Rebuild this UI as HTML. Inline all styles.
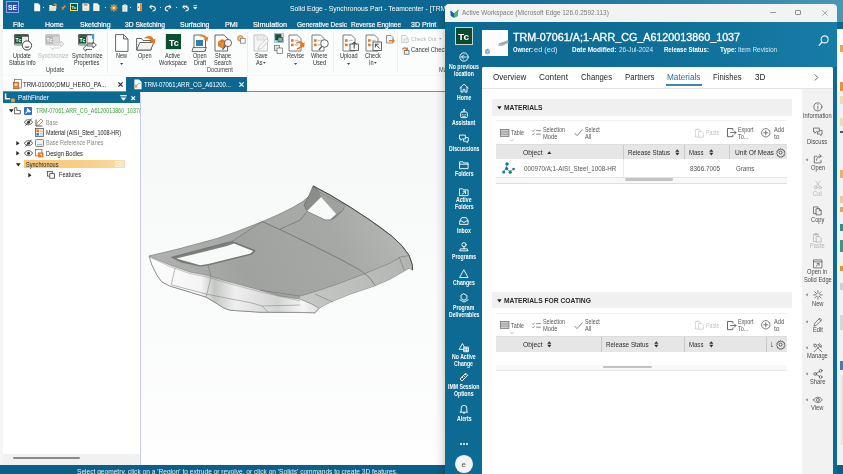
<!DOCTYPE html>
<html><head><meta charset="utf-8"><title>Solid Edge - Active Workspace</title>
<style>
html,body{margin:0;padding:0;}
body{width:843px;height:474px;overflow:hidden;position:relative;background:#f6f9f9;font-family:"Liberation Sans",sans-serif;}
.b{position:absolute;}
.t{position:absolute;white-space:nowrap;transform-origin:0 50%;}
.i{position:absolute;overflow:visible;}
#wrap{position:absolute;left:-4px;top:-4px;width:851px;height:482px;filter:blur(0.5px);}
#in{position:absolute;left:4px;top:4px;width:843px;height:474px;}
</style></head><body><div id="wrap"><div id="in">
<div class="b" style="left:-4.0px;top:-4.0px;width:851.0px;height:482.0px;background:linear-gradient(180deg,#f5f8f7 0px,#f5f8f7 96px,#fafbfb 300px,#fefefe 468px);"></div>
<div class="b" style="left:2.8px;top:-4.0px;width:844.2px;height:33.2px;background:#0c6890;"></div>
<div class="b" style="left:2.8px;top:29.2px;width:844.2px;height:46.3px;background:#fbfcfc;"></div>
<div class="b" style="left:2.8px;top:75.5px;width:844.2px;height:16.5px;background:#fdfdfd;"></div>
<div class="b" style="left:2.8px;top:91.3px;width:443.2px;height:0.8px;background:#5b9bb8;"></div>
<div class="b" style="left:-4.0px;top:-4.0px;width:6.8px;height:482.0px;background:#f4f6f6;"></div>
<div class="b" style="left:6.2px;top:0.8px;width:13.2px;height:12.4px;background:#2b50b4;border:0.8px solid #8fa6e6;box-sizing:border-box;"></div>
<span class="t" style="left:8.2px;top:3.1px;font-size:7.5px;line-height:9.00px;color:#ffffff;font-weight:700;transform:scaleX(0.900);">SE</span>
<span class="t" style="left:290.4px;top:3.6px;font-size:7.86px;line-height:9.43px;color:#ffffff;transform:scaleX(0.860);">Solid Edge - Synchronous Part - Teamcenter - [TRM</span>
<span class="t" style="left:12.5px;top:19.7px;font-size:8.0px;line-height:9.60px;color:#ffffff;transform:scaleX(0.853);-webkit-text-stroke:0.200px #fff;">File</span>
<span class="t" style="left:45.4px;top:19.7px;font-size:8.0px;line-height:9.60px;color:#ffffff;transform:scaleX(0.872);-webkit-text-stroke:0.200px #fff;">Home</span>
<span class="t" style="left:79.5px;top:19.7px;font-size:8.0px;line-height:9.60px;color:#ffffff;transform:scaleX(0.868);-webkit-text-stroke:0.200px #fff;">Sketching</span>
<span class="t" style="left:125.0px;top:19.7px;font-size:8.0px;line-height:9.60px;color:#ffffff;transform:scaleX(0.841);-webkit-text-stroke:0.200px #fff;">3D Sketching</span>
<span class="t" style="left:180.0px;top:19.7px;font-size:8.0px;line-height:9.60px;color:#ffffff;transform:scaleX(0.873);-webkit-text-stroke:0.200px #fff;">Surfacing</span>
<span class="t" style="left:225.0px;top:19.7px;font-size:8.0px;line-height:9.60px;color:#ffffff;transform:scaleX(0.900);-webkit-text-stroke:0.200px #fff;">PMI</span>
<span class="t" style="left:253.0px;top:19.7px;font-size:8.0px;line-height:9.60px;color:#ffffff;transform:scaleX(0.910);-webkit-text-stroke:0.200px #fff;">Simulation</span>
<span class="t" style="left:296.5px;top:19.7px;font-size:8.0px;line-height:9.60px;color:#ffffff;transform:scaleX(0.813);-webkit-text-stroke:0.200px #fff;">Generative Desic</span>
<span class="t" style="left:351.0px;top:19.7px;font-size:8.0px;line-height:9.60px;color:#ffffff;transform:scaleX(0.815);-webkit-text-stroke:0.200px #fff;">Reverse Enginee</span>
<span class="t" style="left:411.3px;top:19.7px;font-size:8.0px;line-height:9.60px;color:#ffffff;transform:scaleX(0.875);-webkit-text-stroke:0.200px #fff;">3D Print</span>
<div class="b" style="left:-4.0px;top:465.2px;width:851.0px;height:12.8px;background:#0b6087;"></div>
<span class="t" style="left:77.0px;top:466.5px;font-size:7.6px;line-height:9.12px;color:#e8f2f6;transform:scaleX(0.869);">Select geometry, click on a &#x27;Region&#x27; to extrude or revolve, or click on &#x27;Solids&#x27; commands to create 3D features.</span>
<span class="t" style="left:22.7px;top:80.4px;font-size:7.56px;line-height:9.07px;color:#222;transform:scaleX(0.791);">TRM-01000;DMU_HERO_PA...</span>
<svg class="i" style="left:118.1px;top:82.1px;" width="5" height="5" viewBox="0 0 5 5"><path d="M0.400 0.400L4.60 4.60M4.60 0.400L0.400 4.60" stroke="#222" stroke-width="1.1" fill="none"/></svg>
<div class="b" style="left:126.0px;top:77.4px;width:120.6px;height:14.6px;background:#0c6890;"></div>
<span class="t" style="left:144.0px;top:80.4px;font-size:7.56px;line-height:9.07px;color:#ffffff;transform:scaleX(0.790);">TRM-07061;ARR_CG_A61200...</span>
<svg class="i" style="left:239.3px;top:82.1px;" width="5" height="5" viewBox="0 0 5 5"><path d="M0.400 0.400L4.60 4.60M4.60 0.400L0.400 4.60" stroke="#ffffff" stroke-width="1.2" fill="none"/></svg>
<div class="b" style="left:3.0px;top:91.8px;width:137.4px;height:11.0px;background:#0d6a92;"></div>
<span class="t" style="left:17.5px;top:94.1px;font-size:7.37px;line-height:8.84px;color:#ffffff;transform:scaleX(0.860);">PathFinder</span>
<div class="b" style="left:140.2px;top:92.6px;width:1.0px;height:372.6px;background:#c9cdf0;"></div>
<div class="b" style="left:3.0px;top:102.8px;width:137.2px;height:351.4px;background:#ffffff;"></div>
<div class="b" style="left:3.0px;top:454.2px;width:137.2px;height:11.0px;background:#f1f1f1;"></div>
<div class="b" style="left:13.0px;top:457.3px;width:67.0px;height:2.0px;background:#8a8a8a;border-radius:1px;"></div>
<span class="t" style="left:36.0px;top:107.3px;font-size:6.3px;line-height:7.56px;color:#3aa23a;transform:scaleX(0.847);">TRM-07061;ARR_CG_A6120013860_1037/</span>
<span class="t" style="left:46.0px;top:118.5px;font-size:6.3px;line-height:7.56px;color:#888;transform:scaleX(0.836);">Base</span>
<span class="t" style="left:46.0px;top:128.7px;font-size:6.3px;line-height:7.56px;color:#222;transform:scaleX(0.864);">Material (AISI_Steel_1008-HR)</span>
<span class="t" style="left:46.0px;top:139.3px;font-size:6.3px;line-height:7.56px;color:#888;transform:scaleX(0.869);">Base Reference Planes</span>
<span class="t" style="left:46.0px;top:150.0px;font-size:6.3px;line-height:7.56px;color:#222;transform:scaleX(0.911);">Design Bodies</span>
<span class="t" style="left:58.5px;top:171.4px;font-size:6.3px;line-height:7.56px;color:#222;transform:scaleX(0.885);">Features</span>
<div class="b" style="left:24.0px;top:160.0px;width:101.0px;height:8.2px;background:linear-gradient(90deg,#f8c775,#f9d08c 70%,#fbdca8);"></div>
<span class="t" style="left:25.5px;top:160.7px;font-size:6.3px;line-height:7.56px;color:#222;transform:scaleX(0.884);">Synchronous</span>
<svg class="i" style="left:13.5px;top:34.0px;" width="19" height="17" viewBox="0 0 19 17"><rect x="0.5" y="0.5" width="14" height="10.5" rx="1" fill="#e9ecea" stroke="#4a4a4a" stroke-width="0.8"/><rect x="0.5" y="0.5" width="14" height="2.2" fill="#4a4a4a"/><rect x="1" y="2.4" width="7" height="7.2" fill="#0c5a36"/><text x="1.6" y="8.2" font-size="5.2" font-weight="700" fill="#fff" font-family="Liberation Sans">Tc</text><circle cx="13" cy="11.5" r="4.6" fill="#fff" stroke="#444" stroke-width="1"/><path d="M10.2 12.5a3 2.4 0 0 0 5.6 0z" fill="#666"/></svg>
<span class="t" style="left:13.0px;top:52.2px;font-size:6.8px;line-height:8.16px;color:#333;transform:scaleX(0.820);">Update</span>
<span class="t" style="left:8.7px;top:58.5px;font-size:6.8px;line-height:8.16px;color:#333;transform:scaleX(0.820);">Status Info</span>
<svg class="i" style="left:45.0px;top:34.0px;" width="19" height="17" viewBox="0 0 19 17"><rect x="0.5" y="0.5" width="14" height="10.5" rx="1" fill="#d9d9d9" stroke="#c4c4c4" stroke-width="0.8"/><rect x="0.5" y="0.5" width="14" height="2.2" fill="#c4c4c4"/><rect x="1" y="2.4" width="7" height="7.2" fill="#b5b5b5"/><text x="1.6" y="8.2" font-size="5.2" font-weight="700" fill="#fff" font-family="Liberation Sans">Tc</text><path d="M9 9h7v-2l3 3-3 3v-2h-7z" fill="#ececec" stroke="#c2c2c2" stroke-width="0.7"/><path d="M15 14h-7v2l-3-3" fill="none" stroke="#c8c8c8" stroke-width="0.7"/></svg>
<span class="t" style="left:38.3px;top:52.2px;font-size:6.8px;line-height:8.16px;color:#b9b9b9;transform:scaleX(0.820);">Synchronize</span>
<svg class="i" style="left:78.0px;top:34.0px;" width="19" height="17" viewBox="0 0 19 17"><rect x="0.5" y="0.5" width="14" height="10.5" rx="1" fill="#e9ecea" stroke="#4a4a4a" stroke-width="0.8"/><rect x="0.5" y="0.5" width="14" height="2.2" fill="#4a4a4a"/><rect x="1" y="2.4" width="7" height="7.2" fill="#0c5a36"/><text x="1.6" y="8.2" font-size="5.2" font-weight="700" fill="#fff" font-family="Liberation Sans">Tc</text><rect x="9" y="1" width="6.5" height="8" fill="#f4f4f4" stroke="#555" stroke-width="0.7"/><rect x="14" y="0" width="2.2" height="5" fill="#3aa0d0"/><path d="M9 10h6v-2l3.4 3-3.4 3v-2h-6z" fill="#f2f2f2" stroke="#444" stroke-width="0.8"/><path d="M14 15.5h-6v1.6l-3-2.6 3-2.6" fill="#f2f2f2" stroke="#444" stroke-width="0.8"/></svg>
<span class="t" style="left:71.5px;top:52.2px;font-size:6.8px;line-height:8.16px;color:#333;transform:scaleX(0.820);">Synchronize</span>
<span class="t" style="left:74.1px;top:58.5px;font-size:6.8px;line-height:8.16px;color:#333;transform:scaleX(0.820);">Properties</span>
<span class="t" style="left:45.8px;top:65.7px;font-size:6.6px;line-height:7.92px;color:#444;transform:scaleX(0.860);">Update</span>
<div class="b" style="left:106.6px;top:32.0px;width:0.7px;height:41.0px;background:#eceeef;"></div>
<svg class="i" style="left:115.0px;top:33.5px;" width="14" height="18" viewBox="0 0 14 18"><path d="M0.6 0.6h8l4.4 4.4v12.4h-12.4z" fill="#fff" stroke="#555" stroke-width="0.9"/><path d="M8.6 0.6v4.4h4.4" fill="none" stroke="#555" stroke-width="0.9"/></svg>
<span class="t" style="left:116.0px;top:52.2px;font-size:6.8px;line-height:8.16px;color:#333;transform:scaleX(0.820);">New</span>
<svg class="i" style="left:119.8px;top:63.4px;" width="3.2" height="1.98" viewBox="0 0 3.2 1.98"><path d="M0 0h3.2l-1.6 1.98z" fill="#444"/></svg>
<svg class="i" style="left:136.0px;top:35.0px;" width="20" height="16" viewBox="0 0 20 16"><path d="M0.6 15V3.5h5l1.5 2h8V15z" fill="#fdfdfd" stroke="#555" stroke-width="0.9"/><path d="M0.6 15l3.2-7.5h14L14.6 15z" fill="#f3f3f3" stroke="#555" stroke-width="0.9"/><path d="M8 3.400c3.400-3.600 8.400-3 9.600 1l1.900-0.900-1 5.600-5.200-2.400 1.900-0.900c-1.300-2.600-4-2.900-7.200-2.400z" fill="#e9781c"/></svg>
<span class="t" style="left:138.2px;top:52.2px;font-size:6.8px;line-height:8.16px;color:#333;transform:scaleX(0.820);">Open</span>
<div class="b" style="left:165.2px;top:34.4px;width:16.2px;height:16.0px;background:#0b4f2f;border-left:1px solid #e6e98c;border-bottom:1px solid #e6e98c;box-sizing:border-box;"></div>
<span class="t" style="left:168.6px;top:38.4px;font-size:8.6px;line-height:10.32px;color:#ffffff;font-weight:700;transform:scaleX(1.043);">Tc</span>
<span class="t" style="left:164.8px;top:52.2px;font-size:6.8px;line-height:8.16px;color:#333;transform:scaleX(0.820);">Active</span>
<span class="t" style="left:158.5px;top:58.5px;font-size:6.8px;line-height:8.16px;color:#333;transform:scaleX(0.820);">Workspace</span>
<svg class="i" style="left:192.0px;top:33.5px;" width="17" height="18" viewBox="0 0 17 18"><path d="M2 1h8.5l3 3v13H2z" fill="#fff" stroke="#555" stroke-width="0.9"/><rect x="4" y="6" width="7" height="6" fill="#2f7fb2"/><path d="M1 13.5h13.5l-2 4H0z" fill="#f0f0f0" stroke="#555" stroke-width="0.8"/><path d="M7 2.6c3-2.6 6.6-2 7.8 0.8l1.5-0.8-0.9 4.6-4-2 1.4-0.8c-1.1-1.9-3.3-2.1-5.8-1.8z" fill="#e9781c"/></svg>
<span class="t" style="left:193.2px;top:52.2px;font-size:6.8px;line-height:8.16px;color:#333;transform:scaleX(0.820);">Open</span>
<span class="t" style="left:194.0px;top:58.5px;font-size:6.8px;line-height:8.16px;color:#333;transform:scaleX(0.820);">Draft</span>
<svg class="i" style="left:214.0px;top:33.5px;" width="19" height="18" viewBox="0 0 19 18"><path d="M1 1h9l3.6 3.6V17H1z" fill="#fff" stroke="#555" stroke-width="0.9"/><path d="M4 7.5l4.2-2.4 4.2 2.4v4.6l-4.2 2.4L4 12.100z" fill="#e9781c"/><path d="M4 7.5l4.2 2.2 4.2-2.200M8.2 9.700v4.8" stroke="#f7b77d" stroke-width="0.6" fill="none"/><circle cx="14" cy="9" r="3.6" fill="#fff" fill-opacity="0.85" stroke="#555" stroke-width="0.9"/><path d="M11.5 12l-3 3.6" stroke="#555" stroke-width="1.3"/></svg>
<span class="t" style="left:214.9px;top:52.2px;font-size:6.8px;line-height:8.16px;color:#333;transform:scaleX(0.820);">Shape</span>
<span class="t" style="left:214.2px;top:58.5px;font-size:6.8px;line-height:8.16px;color:#333;transform:scaleX(0.820);">Search</span>
<span class="t" style="left:207.1px;top:65.7px;font-size:6.6px;line-height:7.92px;color:#444;transform:scaleX(0.860);">Document</span>
<svg class="i" style="left:236.6px;top:35.0px;" width="9" height="9" viewBox="0 0 9 9"><circle cx="3.4" cy="3.4" r="2.8" fill="#f2c28e" stroke="#c6771f" stroke-width="0.8"/><rect x="3.6" y="3.6" width="4.6" height="4.6" fill="#f7f7f7" stroke="#777" stroke-width="0.7"/></svg>
<div class="b" style="left:247.0px;top:32.0px;width:0.7px;height:41.0px;background:#eceeef;"></div>
<svg class="i" style="left:252.8px;top:33.5px;" width="17" height="18" viewBox="0 0 17 18"><path d="M1 1h10.500l3 3V17H1z" fill="#f6f6f6" stroke="#bdbdbd" stroke-width="0.9"/><rect x="4" y="1" width="7" height="5" fill="#ececec" stroke="#c9c9c9" stroke-width="0.6"/><path d="M5 15.500l1-3.200 7.500-7.500 2.200 2.200-7.500 7.500z" fill="#fafafa" stroke="#bdbdbd" stroke-width="0.8"/></svg>
<span class="t" style="left:254.6px;top:52.2px;font-size:6.8px;line-height:8.16px;color:#333;transform:scaleX(0.820);">Save</span>
<span class="t" style="left:256.1px;top:58.5px;font-size:6.8px;line-height:8.16px;color:#333;transform:scaleX(0.820);">As</span>
<svg class="i" style="left:263.4px;top:61.9px;" width="2.8" height="1.74" viewBox="0 0 2.8 1.74"><path d="M0 0h2.8l-1.4 1.74z" fill="#444"/></svg>
<div class="b" style="left:273.6px;top:33.4px;width:10.0px;height:9.8px;background:#cfe3f1;border:0.6px solid #9dc3dd;box-sizing:border-box;"></div>
<svg class="i" style="left:274.6px;top:34.4px;" width="8" height="8" viewBox="0 0 8 8"><rect x="0.5" y="0.5" width="5.5" height="5.5" fill="#0c5a36" stroke="#333" stroke-width="0.6"/><rect x="3" y="3.4" width="4.6" height="4.2" fill="#8cb0a0" stroke="#333" stroke-width="0.6"/></svg>
<svg class="i" style="left:274.4px;top:44.8px;" width="9" height="9" viewBox="0 0 9 9"><rect x="0.5" y="0.5" width="5" height="5" fill="#e8e8e8" stroke="#666" stroke-width="0.7"/><rect x="3" y="3" width="5.4" height="5.4" fill="#f7f7f7" stroke="#666" stroke-width="0.7"/></svg>
<svg class="i" style="left:288.0px;top:33.5px;" width="18" height="18" viewBox="0 0 18 18"><path d="M1 1h8.500l3.500 3.500V17H1z" fill="#fdfdfd" stroke="#6e6e6e" stroke-width="0.9"/><rect x="3" y="5.200" width="2.600" height="2.600" fill="#e9781c"/><rect x="6.600" y="5.800" width="4" height="1.400" fill="#c4c4c4"/><rect x="3" y="9.600" width="2.600" height="2.600" fill="#e9781c"/><rect x="6.600" y="10.200" width="4" height="1.400" fill="#c4c4c4"/><path d="M8 8.5c3-2 6-1.400 7.200 0.800l1.500-1-0.600 5.200-4.800-1.800 1.700-1c-1-1.500-3-1.700-5-0.900z" fill="#e9781c"/><path d="M9 15l6-3" stroke="#e9781c" stroke-width="1.800"/></svg>
<span class="t" style="left:287.2px;top:52.2px;font-size:6.8px;line-height:8.16px;color:#333;transform:scaleX(0.820);">Revise</span>
<svg class="i" style="left:294.1px;top:63.4px;" width="3.2" height="1.98" viewBox="0 0 3.2 1.98"><path d="M0 0h3.2l-1.6 1.98z" fill="#444"/></svg>
<svg class="i" style="left:311.0px;top:33.5px;" width="19" height="18" viewBox="0 0 19 18"><path d="M1 1h8.500l3.500 3.500V17H1z" fill="#fdfdfd" stroke="#6e6e6e" stroke-width="0.9"/><rect x="3" y="5.200" width="2.600" height="2.600" fill="#e9781c"/><rect x="6.600" y="5.800" width="4" height="1.400" fill="#c4c4c4"/><rect x="3" y="9.600" width="2.600" height="2.600" fill="#e9781c"/><rect x="6.600" y="10.200" width="4" height="1.400" fill="#c4c4c4"/><circle cx="13.500" cy="9.500" r="3.800" fill="#fff" fill-opacity="0.9" stroke="#555" stroke-width="0.9"/><path d="M10.800 12.400l-3 3.600" stroke="#555" stroke-width="1.300"/></svg>
<span class="t" style="left:310.8px;top:52.2px;font-size:6.8px;line-height:8.16px;color:#333;transform:scaleX(0.820);">Where</span>
<span class="t" style="left:312.5px;top:58.5px;font-size:6.8px;line-height:8.16px;color:#333;transform:scaleX(0.820);">Used</span>
<div class="b" style="left:333.0px;top:32.0px;width:0.7px;height:41.0px;background:#eceeef;"></div>
<svg class="i" style="left:341.5px;top:33.5px;" width="18" height="18" viewBox="0 0 18 18"><path d="M1 1h8.500l3.500 3.500V17H1z" fill="#fdfdfd" stroke="#6e6e6e" stroke-width="0.9"/><rect x="3" y="5.200" width="2.600" height="2.600" fill="#e9781c"/><rect x="6.600" y="5.800" width="4" height="1.400" fill="#c4c4c4"/><rect x="3" y="9.600" width="2.600" height="2.600" fill="#e9781c"/><rect x="6.600" y="10.200" width="4" height="1.400" fill="#c4c4c4"/><rect x="8" y="10" width="8.500" height="6.500" fill="#f4f4f4" stroke="#444" stroke-width="0.8"/><path d="M12.200 14.500V8.200M10 10.200l2.200-2.200 2.200 2.200" fill="none" stroke="#333" stroke-width="0.9"/></svg>
<span class="t" style="left:340.2px;top:52.2px;font-size:6.8px;line-height:8.16px;color:#333;transform:scaleX(0.820);">Upload</span>
<svg class="i" style="left:347.4px;top:63.4px;" width="3.2" height="1.98" viewBox="0 0 3.2 1.98"><path d="M0 0h3.2l-1.6 1.98z" fill="#444"/></svg>
<svg class="i" style="left:365.0px;top:33.5px;" width="18" height="18" viewBox="0 0 18 18"><path d="M1 1h8.500l3.500 3.500V17H1z" fill="#fdfdfd" stroke="#6e6e6e" stroke-width="0.9"/><rect x="3" y="5.200" width="2.600" height="2.600" fill="#e9781c"/><rect x="6.600" y="5.800" width="4" height="1.400" fill="#c4c4c4"/><rect x="3" y="9.600" width="2.600" height="2.600" fill="#e9781c"/><rect x="6.600" y="10.200" width="4" height="1.400" fill="#c4c4c4"/><rect x="8" y="8" width="8.500" height="8.500" fill="#fafafa" stroke="#444" stroke-width="0.8"/><path d="M14.800 14.600l-4.200-4.200M10.400 13.400v-3.200h3.200" fill="none" stroke="#333" stroke-width="0.9"/></svg>
<span class="t" style="left:364.7px;top:52.2px;font-size:6.8px;line-height:8.16px;color:#333;transform:scaleX(0.820);">Check</span>
<span class="t" style="left:368.9px;top:58.5px;font-size:6.8px;line-height:8.16px;color:#333;transform:scaleX(0.820);">In</span>
<svg class="i" style="left:374.4px;top:61.9px;" width="2.8" height="1.74" viewBox="0 0 2.8 1.74"><path d="M0 0h2.8l-1.4 1.74z" fill="#444"/></svg>
<svg class="i" style="left:386.4px;top:35.0px;" width="9" height="9" viewBox="0 0 9 9"><path d="M0.500 0.500h4.500l2 2v5.500h-6.500z" fill="#f5f5f5" stroke="#666" stroke-width="0.7"/><path d="M3 5h3.500v-1.500l2.500 2.300-2.500 2.300v-1.500h-3.500z" fill="#e9781c"/></svg>
<div class="b" style="left:396.6px;top:32.0px;width:0.7px;height:41.0px;background:#eceeef;"></div>
<svg class="i" style="left:401.4px;top:35.0px;" width="8" height="8" viewBox="0 0 8 8"><path d="M0.500 0.500h4l2 2v5h-6z" fill="#f6f6f6" stroke="#c4c4c4" stroke-width="0.7"/><rect x="3" y="4" width="4.500" height="3.600" fill="#efefef" stroke="#c4c4c4" stroke-width="0.6"/></svg>
<span class="t" style="left:411.0px;top:35.3px;font-size:6.25px;line-height:7.50px;color:#b7b7b7;transform:scaleX(0.860);">Check Out</span>
<svg class="i" style="left:438.7px;top:38.2px;" width="2.6" height="1.61" viewBox="0 0 2.6 1.61"><path d="M0 0h2.6l-1.3 1.61z" fill="#999"/></svg>
<svg class="i" style="left:401.4px;top:45.6px;" width="8.6" height="8.6" viewBox="0 0 8.6 8.6"><path d="M1 3.500a3 3 0 0 1 5-1.500l1-1v3.200h-3.200l1.100-1.100a1.800 1.800 0 0 0-2.700 0.900z" fill="#e9781c"/><rect x="3.200" y="4.400" width="4.800" height="3.800" fill="#f4f4f4" stroke="#555" stroke-width="0.7"/></svg>
<span class="t" style="left:411.0px;top:45.9px;font-size:6.6px;line-height:7.92px;color:#333;transform:scaleX(0.888);">Cancel Check</span>
<span class="t" style="left:438.6px;top:65.7px;font-size:6.6px;line-height:7.92px;color:#444;transform:scaleX(0.86);">Ma</span>
<svg class="i" style="left:33.6px;top:3.0px;" width="6.4" height="8.48" viewBox="0 0 8 10.6"><path d="M0.300 0.300h4.800l2.600 2.600v7.400h-7.400z" fill="#fbfbf4"/><path d="M5.100 0.300v2.600h2.600" fill="#d9d9cf"/></svg>
<div class="b" style="left:42.9px;top:6.6px;width:1.4px;height:1.4px;background:#e4eef3;"></div>
<svg class="i" style="left:48.6px;top:3.3px;" width="8.0" height="8.0" viewBox="0 0 10 10"><path d="M0.400 9.600V2.400h3l1 1.200h4.400v6z" fill="#f3efe4"/><path d="M0.400 9.600l1.800-4.400h7.600l-1.800 4.400z" fill="#e6e0cf"/><path d="M4.600 2c1.600-1.800 3.800-1.600 4.600 0.200l1-0.500-0.600 3-2.600-1.200 1-0.500c-0.700-1.200-2-1.300-3.400-1z" fill="#f08a24"/></svg>
<svg class="i" style="left:60.2px;top:3.6px;" width="6.4" height="7.2" viewBox="0 0 8 9"><path d="M4.600 0.400l3 3-1.400 0.600-1.600 2-0.400 1.800-1.300-1.300-2.500 2.500 2.500-3.500-1.300-1.300 1.800-0.400 2-1.600z" fill="#f08a24"/></svg>
<div class="b" style="left:70.0px;top:3.2px;width:7.8px;height:8.2px;background:#0c5a36;border:0.800px solid #e9e07a;box-sizing:border-box;"></div>
<span class="t" style="left:71.6px;top:4.8px;font-size:4.4px;line-height:5.28px;color:#ffffff;font-weight:700;">Tc</span>
<svg class="i" style="left:82.2px;top:3.3px;" width="7.68" height="8.0" viewBox="0 0 9.6 10"><path d="M0.400 0.400h7.400l1.400 1.400v7.800h-8.800z" fill="#f3ead9"/><rect x="2.200" y="0.400" width="4.600" height="3" fill="#d98f86"/><rect x="1.800" y="5.400" width="6" height="4.200" fill="#faf7ef"/><path d="M2.600 6.800h4.400M2.600 8.200h4.400" stroke="#d8a9a0" stroke-width="0.500"/></svg>
<svg class="i" style="left:93.4px;top:3.1px;" width="6.72" height="8.32" viewBox="0 0 8.4 10.4"><path d="M0.300 0.300h5l2.800 2.800v7h-7.800z" fill="#f4f4ec"/><path d="M1.800 4.400h4.400M1.800 6.200h4.400M1.800 8h4.400" stroke="#d6d6c4" stroke-width="0.600"/></svg>
<div class="b" style="left:104.9px;top:6.6px;width:1.4px;height:1.4px;background:#e4eef3;"></div>
<svg class="i" style="left:110.4px;top:3.5px;" width="7.68" height="7.68" viewBox="0 0 9.6 9.6"><circle cx="4.800" cy="4.800" r="3.200" fill="#f08a24"/><g stroke="#f08a24" stroke-width="1.500"><path d="M4.800 0v9.600M0 4.800h9.600M1.400 1.400l6.800 6.800M8.200 1.400l-6.800 6.800"/></g><circle cx="4.800" cy="4.800" r="1.500" fill="#fff3df"/></svg>
<svg class="i" style="left:122.2px;top:3.5px;" width="6.72" height="8.0" viewBox="0 0 8.4 10"><rect x="0.400" y="1.400" width="6.400" height="8.200" fill="#f4f4ee"/><rect x="2" y="0.300" width="3.200" height="2" fill="#cfcfc4"/><path d="M1.600 4.600h4M1.600 6.200h4M1.600 7.800h2.600" stroke="#b9b9ad" stroke-width="0.600"/></svg>
<div class="b" style="left:130.1px;top:6.6px;width:1.4px;height:1.4px;background:#e4eef3;"></div>
<svg class="i" style="left:137.3px;top:3.3px;" width="5.6" height="8.32" viewBox="0 0 7 10.4"><rect x="0.300" y="0.300" width="5.600" height="9.800" fill="#f6f1e4"/><rect x="3.600" y="0.300" width="2.600" height="9.800" fill="#f08a24"/><rect x="1.200" y="4.600" width="1.200" height="1.600" fill="#a86a2a"/></svg>
<svg class="i" style="left:148.6px;top:3.0px;" width="7.68" height="8.8" viewBox="0 0 9.6 11"><g><path d="M3 2.400L0.800 5.200l3 1.800" fill="none" stroke="#fff" stroke-width="1.200"/><path d="M1.200 5c3-1.600 6.800-0.600 6.800 2.200 0 1.800-1.600 2.800-3.600 2.800" fill="none" stroke="#fff" stroke-width="1.300"/></g></svg>
<div class="b" style="left:160.1px;top:6.6px;width:1.4px;height:1.4px;background:#e4eef3;"></div>
<svg class="i" style="left:163.6px;top:3.0px;" width="7.68" height="8.8" viewBox="0 0 9.6 11"><g transform="translate(9.6,0) scale(-1,1)"><path d="M3 2.400L0.800 5.200l3 1.800" fill="none" stroke="#fff" stroke-width="1.200"/><path d="M1.200 5c3-1.600 6.800-0.600 6.800 2.200 0 1.800-1.600 2.800-3.600 2.800" fill="none" stroke="#fff" stroke-width="1.300"/></g></svg>
<div class="b" style="left:175.9px;top:6.6px;width:1.4px;height:1.4px;background:#e4eef3;"></div>
<svg class="i" style="left:181.6px;top:3.0px;" width="7.68" height="8.8" viewBox="0 0 9.6 11"><g><path d="M3 2.400L0.800 5.200l3 1.800" fill="none" stroke="#fff" stroke-width="1.200"/><path d="M1.200 5c3-1.600 6.800-0.600 6.800 2.200 0 1.800-1.600 2.800-3.600 2.800" fill="none" stroke="#fff" stroke-width="1.300"/></g></svg>
<svg class="i" style="left:185.2px;top:3.8px;" width="4.8" height="6.4" viewBox="0 0 6 8"><path d="M2.400 1.600L0.600 3.800l2.400 1.400" fill="none" stroke="#fff" stroke-width="1"/></svg>
<svg class="i" style="left:193.0px;top:4.9px;" width="4.8" height="4.8" viewBox="0 0 6 6"><path d="M0.400 0.600h4.800M0.800 2.800h4l-2 2.400z" stroke="#fff" stroke-width="0.800" fill="#fff"/></svg>
<svg class="i" style="left:12.6px;top:79.0px;" width="9" height="11" viewBox="0 0 9 11"><rect x="1.600" y="0.400" width="6.800" height="8.600" fill="#fff" stroke="#666" stroke-width="0.700"/><rect x="0.400" y="3.200" width="5.400" height="6.600" fill="#e48a2c" stroke="#8a5a22" stroke-width="0.600"/><rect x="1.400" y="4.400" width="3" height="2.400" fill="#f6d9b0"/></svg>
<svg class="i" style="left:133.6px;top:79.0px;" width="8" height="10.6" viewBox="0 0 8 10.6"><path d="M0.400 0.400h4.600l2.600 2.600v7.200h-7.200z" fill="#fff"/><path d="M1.600 7.800c1.600-2.600 3-3.200 5-3.600" stroke="#8aa9bf" stroke-width="1" fill="none"/><rect x="0.400" y="5.800" width="2.800" height="2.800" fill="#e9a257"/></svg>
<svg class="i" style="left:5.4px;top:93.4px;" width="11" height="10" viewBox="0 0 11 10"><path d="M0.600 0.400v5.400h4.600" stroke="#fff" stroke-width="1.500" fill="none"/><rect x="6.200" y="5.600" width="3.600" height="3.600" fill="#f0a23a"/></svg>
<svg class="i" style="left:120.4px;top:95.4px;" width="7" height="6" viewBox="0 0 7 6"><path d="M0.300 0.700h6.400" stroke="#fff" stroke-width="1.200"/><path d="M0.600 2.600h5.800l-2.900 3.200z" fill="#fff"/></svg>
<svg class="i" style="left:131.2px;top:95.6px;" width="4.4" height="4.4" viewBox="0 0 4.4 4.4"><path d="M0.400 0.400L4.00 4.00M4.00 0.400L0.400 4.00" stroke="#ffffff" stroke-width="1.2" fill="none"/></svg>
<svg class="i" style="left:9.4px;top:109.2px;" width="5" height="4" viewBox="0 0 5 4"><path d="M0 0.300h4.600l-2.300 3.200z" fill="#222"/></svg>
<svg class="i" style="left:14.2px;top:107.0px;" width="7" height="7.6" viewBox="0 0 7 7.6"><path d="M0.600 6.800V0.600h2.200v2.800h3.600v3.400z" fill="#fff" stroke="#555" stroke-width="0.900"/></svg>
<div class="b" style="left:24.4px;top:107.0px;width:7.4px;height:7.6px;background:#2c6fd1;border-radius:1px;"></div>
<svg class="i" style="left:25.2px;top:107.8px;" width="6" height="6" viewBox="0 0 6 6"><path d="M0.600 5.400l2.200-2.200M2.600 0.800l2.600 2.600-1.200 0.400-1.400-0.400-0.400-1.400z" stroke="#fff" stroke-width="1.100" fill="#fff"/></svg>
<svg class="i" style="left:24.4px;top:118.8px;" width="9" height="7" viewBox="0 0 9 7"><path d="M0.400 3.200c2-3.400 6.200-3.400 8.200 0-2 3.400-6.200 3.400-8.200 0z" fill="#fff" stroke="#333" stroke-width="0.800"/><circle cx="4.500" cy="3.200" r="1.500" fill="#333"/><path d="M1.400 6.600l6.200-7" stroke="#333" stroke-width="0.900"/></svg>
<svg class="i" style="left:35.2px;top:117.6px;" width="9" height="9" viewBox="0 0 9 9"><path d="M1 8V1.600" stroke="#333" stroke-width="0.800"/><path d="M1 8h6.400" stroke="#333" stroke-width="0.800"/><path d="M1 8l5.400-5.400" stroke="#333" stroke-width="0.800"/><path d="M6 1l2 2-4 4-2.400 0.600 0.400-2.600z" fill="#fff" stroke="#c2571a" stroke-width="0.700"/></svg>
<svg class="i" style="left:35.0px;top:127.8px;" width="9.6" height="9.6" viewBox="0 0 9.6 9.6"><rect x="0.500" y="0.500" width="8" height="8" fill="#fbfbfb" stroke="#555" stroke-width="0.800"/><rect x="1.400" y="1.400" width="2.600" height="2.800" fill="#e9781c"/><rect x="1.400" y="5" width="2.600" height="2.600" fill="#3b86c7"/><path d="M5 2h2.800M5 3.600h2.800M5 5.400h2.800M5 7h2.800" stroke="#999" stroke-width="0.600"/></svg>
<svg class="i" style="left:15.8px;top:140.6px;" width="4" height="5" viewBox="0 0 4 5"><path d="M0.300 0v4.600l3.200-2.300z" fill="#222"/></svg>
<svg class="i" style="left:24.4px;top:139.8px;" width="9" height="7" viewBox="0 0 9 7"><path d="M0.400 3.200c2-3.400 6.200-3.400 8.200 0-2 3.400-6.200 3.400-8.200 0z" fill="#fff" stroke="#333" stroke-width="0.800"/><circle cx="4.500" cy="3.200" r="1.500" fill="#333"/><path d="M1.400 6.600l6.200-7" stroke="#333" stroke-width="0.900"/></svg>
<svg class="i" style="left:35.2px;top:138.6px;" width="9.6" height="9" viewBox="0 0 9.6 9"><rect x="0.500" y="0.500" width="8" height="7" rx="1" fill="#f3f3f3" stroke="#666" stroke-width="0.800"/><path d="M2 5.600h5" stroke="#888" stroke-width="0.700"/></svg>
<svg class="i" style="left:15.8px;top:151.2px;" width="4" height="5" viewBox="0 0 4 5"><path d="M0.300 0v4.600l3.200-2.300z" fill="#222"/></svg>
<svg class="i" style="left:24.4px;top:150.4px;" width="9" height="7" viewBox="0 0 9 7"><path d="M0.400 3.200c2-3.400 6.200-3.400 8.200 0-2 3.400-6.200 3.400-8.200 0z" fill="#fff" stroke="#333" stroke-width="0.800"/><circle cx="4.500" cy="3.200" r="1.500" fill="#333"/></svg>
<svg class="i" style="left:35.4px;top:149.4px;" width="9" height="9" viewBox="0 0 9 9"><rect x="0.500" y="0.500" width="6.400" height="6.400" fill="#f6f6f6" stroke="#666" stroke-width="0.700"/><path d="M3 3.400h5.400v5h-5.400z" fill="#e8742a"/><path d="M4.400 4.600l2.600 0.400-0.400 2.600z" fill="#fbe2c8"/></svg>
<svg class="i" style="left:15.6px;top:162.6px;" width="5" height="4" viewBox="0 0 5 4"><path d="M0 0.300h4.600l-2.300 3.200z" fill="#222"/></svg>
<svg class="i" style="left:114.6px;top:161.2px;" width="9" height="6" viewBox="0 0 9 6"><rect x="0.300" y="0.300" width="7.600" height="5.200" fill="#fbe3b4" stroke="#f4f4f4" stroke-width="0.600"/><path d="M2.400 1.800l1.800 1.800 1.800-1.800" stroke="#fff" stroke-width="0.900" fill="none"/></svg>
<svg class="i" style="left:28.4px;top:172.8px;" width="4" height="5" viewBox="0 0 4 5"><path d="M0.300 0v4.600l3.200-2.300z" fill="#222"/></svg>
<svg class="i" style="left:47.4px;top:170.8px;" width="8.4" height="8" viewBox="0 0 8.4 8"><rect x="0.500" y="0.500" width="4.800" height="4.600" fill="#fff" stroke="#444" stroke-width="0.800"/><rect x="2.800" y="2.600" width="4.800" height="4.600" fill="#fff" stroke="#444" stroke-width="0.800"/></svg>
<svg class="i" style="left:0;top:0" width="843" height="474" viewBox="0 0 843 474">
<defs>
<linearGradient id="hg1" x1="150" y1="300" x2="410" y2="200" gradientUnits="userSpaceOnUse">
<stop offset="0" stop-color="#b4b6b4"/><stop offset="0.35" stop-color="#a0a2a0"/><stop offset="0.7" stop-color="#a6a8a6"/><stop offset="1" stop-color="#b9bbb9"/></linearGradient>
<linearGradient id="hg2" x1="150" y1="0" x2="320" y2="0" gradientUnits="userSpaceOnUse">
<stop offset="0" stop-color="#fdfdfd"/><stop offset="0.3" stop-color="#f4f4f4"/><stop offset="0.38" stop-color="#c4c6c4"/><stop offset="0.5" stop-color="#efefef"/><stop offset="0.75" stop-color="#d2d4d2"/><stop offset="0.9" stop-color="#f6f6f6"/><stop offset="1" stop-color="#dcdcdc"/></linearGradient>
<linearGradient id="hg3" x1="300" y1="300" x2="410" y2="255" gradientUnits="userSpaceOnUse">
<stop offset="0" stop-color="#c6c8c6"/><stop offset="1" stop-color="#b2b4b2"/></linearGradient>
</defs>
<!-- outer silhouette / top surface -->
<path d="M149.200 255.900 L162 253 L181 248.300 L199.500 243.300 L218 238.200 L236.900 231.600 L254.700 224.600 L264.200 220.800 L278.500 214.600 L292.700 207.500 L303.100 201.300 L308.800 196.600 L312.600 192.300 L313.100 185.900
 L330.200 195 L350.200 207.100 L370 220.100 L380.200 227 L392.200 236.400 L402.200 246 L409.200 255.500 L412.200 264.500 L412.600 270.100
 L409.200 268.100 L390.200 279.100 L374.100 286.100 L350.100 294.100 L330.100 302.200 L319 308.200 L315 312.800 L300 312.400 L260 312.200 L230.200 310.200 L224.200 308.200 L216.200 303.200 L206.100 297.100 L190.100 292.100 L170.100 286.100 L162 282.100 L157 275.100 L152 265.100 Z" fill="url(#hg1)" stroke="#5a5c5a" stroke-width="0.600" stroke-linejoin="round"/>
<!-- lighter upper-left band -->
<path d="M149.200 255.900 L181 248.300 L218 238.200 L254.700 224.600 L262 221.500 L232 241.500 L228 244 L176 257 Z" fill="#b3b5b3" opacity="0.350"/>
<path d="M262 221.500 L292.700 207.500 L303.100 201.300 L304 205.500 L307.100 211.100 L300.100 220.100 L280.100 229.100 Z" fill="#adafad" opacity="0.400"/>
<!-- right lower band -->
<path d="M300 296.100 L320 290.100 L340.100 283.100 L366.100 273.100 L390.200 263.100 L400.200 257.100 L409.200 255.500 L412.200 264.500 L412.600 270.100 L409.200 268.100 L390.200 279.100 L374.100 286.100 L350.100 294.100 L330.100 302.200 L319 308.200 L312 304.200 L300 299.100 Z" fill="url(#hg3)"/>
<!-- front face -->
<path d="M149 256.100 L170.100 265.100 L190.100 272.100 L206.100 275.100 L230.200 282.100 L260 290.100 L280 296 L300 299.100 L312 304.200 L319 308.200 L315 312.800 L300 312.400 L260 312.200 L230.200 310.200 L224.200 308.200 L216.200 303.200 L206.100 297.100 L190.100 292.100 L170.100 286.100 L162 282.100 L157 275.100 L152 265.100 Z" fill="url(#hg2)" stroke="#666" stroke-width="0.500"/>
<path d="M149.500 257.100 L170.100 266.600 L190.100 273.600 L206.100 276.800 L230.200 283.800 L260 291.800 L300 301" fill="none" stroke="#8a8c8a" stroke-width="0.500"/>
<path d="M175.100 268.100 L171.100 285.100 M211.100 277.100 L206.100 297.100 M206 294 L226 298 L250 302.500 L262 306 L268 312 M262 306 L300 305 M172 285 L206 294" fill="none" stroke="#777" stroke-width="0.500"/>
<!-- left hole -->
<path d="M171.600 257.200 L225.400 243 L231.700 241.400 L255.200 250.400 L252.200 254.100 L208.100 265.100 L200.100 266.100 L181 262 Z" fill="#7d7f7d" stroke="#555" stroke-width="0.500"/>
<path d="M176.500 258.600 L227 246 L234 243.600 L253 251 L250.500 253.600 L208.100 264.100 L200.100 265.300 Z" fill="#f8fafa"/>
<!-- right hole -->
<path d="M304.100 205.100 L309.100 195 L313.100 186 L319.100 192 L344.200 205.100 L343.200 210.100 L334.200 218.100 L330.200 220 L325.200 219.800 L307.100 211.100 Z" fill="#8b8d8b" stroke="#555" stroke-width="0.500"/>
<path d="M319.100 192 L344.200 205.100 L343.200 210.100 L336.200 214.100 L321.100 197 Z" fill="#9fa19f"/>
<path d="M307.100 211.100 L321.100 197 L336.200 214.100 L330.200 219.500 L325.200 219.500 Z" fill="#f8fafa"/>
<!-- crease lines -->
<path d="M262 221.500 L280.100 229.600 L310.100 244.100 L340.200 259.200 L360.100 270.100 L369.100 277.100 L375.200 285.600" fill="none" stroke="#5a5c5a" stroke-width="0.600"/>
<path d="M280.100 229.100 L300.100 220.100 L307.100 211.500" fill="none" stroke="#5a5c5a" stroke-width="0.500"/>
<path d="M262 221.500 L232 241.500" fill="none" stroke="#666" stroke-width="0.500"/>
<path d="M208.100 265.100 L211.100 277.100 M260 290.100 L300 296.100 L320 290.100 L340.100 283.100 L366.100 273.100 L390.200 263.100 L400.200 257.100 L409 255.600 M399.200 257.100 L404.200 270.100 M315 294.100 L333 302" fill="none" stroke="#6a6c6a" stroke-width="0.500"/>
<path d="M313.100 186 L330.200 195 L350.200 207.100 L370 220.100 L392.200 236.400 L402.200 246 L409.200 255.500 L412.200 264.500 L412.600 270.100" fill="none" stroke="#3f413f" stroke-width="0.900"/>
</svg>
<svg class="i" style="left:838.0px;top:5.2px;" width="6" height="6" viewBox="0 0 6 6"><path d="M0.400 0.400L5.60 5.60M5.60 0.400L0.400 5.60" stroke="#ffffff" stroke-width="1.3" fill="none"/></svg>
<div class="b" style="left:837.2px;top:92.0px;width:9.8px;height:372.0px;background:#f1f2f3;"></div>
<div class="b" style="left:839.6px;top:45.0px;width:7.4px;height:7.0px;background:#f0a24a;"></div>
<div class="b" style="left:839.6px;top:82.0px;width:7.4px;height:9.0px;background:#e9922e;"></div>
<div class="b" style="left:839.6px;top:96.0px;width:7.4px;height:8.0px;background:#f3d9a8;"></div>
<div class="b" style="left:839.6px;top:118.0px;width:7.4px;height:8.0px;background:#f3d9a8;"></div>
<div class="b" style="left:839.6px;top:131.0px;width:7.4px;height:2.0px;background:#555;"></div>
<div class="b" style="left:839.6px;top:170.0px;width:7.4px;height:8.0px;background:#f0b060;"></div>
<div class="b" style="left:839.6px;top:196.0px;width:7.4px;height:7.0px;background:#f0c890;"></div>
<div class="b" style="left:839.6px;top:207.0px;width:7.4px;height:5.0px;background:#f0a24a;"></div>
<div class="b" style="left:839.6px;top:224.0px;width:7.4px;height:7.0px;background:#2f8f8f;"></div>
<div class="b" style="left:839.6px;top:240.0px;width:7.4px;height:12.0px;background:#3a9a7a;"></div>
<div class="b" style="left:839.6px;top:266.0px;width:7.4px;height:5.0px;background:#e9922e;"></div>
<div class="b" style="left:839.6px;top:283.0px;width:7.4px;height:7.0px;background:#cfcfcf;"></div>
<div class="b" style="left:839.6px;top:315.0px;width:7.4px;height:15.0px;background:#d6d6d6;"></div>
<div class="b" style="left:839.6px;top:361.0px;width:7.4px;height:9.0px;background:#3a7fbf;"></div>
<div class="b" style="left:841.0px;top:375.0px;width:6.0px;height:70.0px;background:#f1e3c4;"></div>
<div class="b" style="left:446.0px;top:-4.0px;width:401.0px;height:26.0px;background:linear-gradient(90deg,#0f698f 0%,#2c83a7 60%,#4a97b5 100%);"></div>
<div class="b" style="left:435.0px;top:8.0px;width:11.0px;height:470.0px;background:linear-gradient(90deg,rgba(0,0,0,0),rgba(0,0,0,0.050) 50%,rgba(0,0,0,0.170));"></div>
<div class="b" style="left:445.3px;top:4.4px;width:391.9px;height:473.6px;background:#0d6a92;border-radius:4px 4px 0 0;"></div>
<div class="b" style="left:445.3px;top:4.4px;width:391.9px;height:17.5px;background:#f3f3f3;border-radius:4px 4px 0 0;"></div>
<svg class="i" style="left:450.4px;top:8.6px;" width="9" height="9" viewBox="0 0 9 9"><path d="M0.500 1.500l3.500 3 4.500-4-1 6.500-3.500 1.800-3.200-2z" fill="#2a8fc0"/><path d="M4 4.500l4.500-4-1 6.500-3.500 1.800z" fill="#49b37a"/><path d="M0.500 1.500l3.500 3v4.300l-3.200-2z" fill="#1d5fa8"/></svg>
<span class="t" style="left:461.6px;top:8.9px;font-size:7.4px;line-height:8.88px;color:#7a7a7a;transform:scaleX(0.873);">Active Workspace (Microsoft Edge 126.0.2592.113)</span>
<div class="b" style="left:769.6px;top:12.2px;width:6.4px;height:0.7px;background:#9a9a9a;"></div>
<div class="b" style="left:795.4px;top:9.6px;width:5.8px;height:5.8px;background:transparent;border:0.700px solid #8f8f8f;box-sizing:border-box;border-radius:1px;"></div>
<svg class="i" style="left:821.6px;top:9.6px;" width="6" height="6" viewBox="0 0 6 6"><path d="M0.300 0.300l5.400 5.400M5.700 0.300l-5.400 5.400" stroke="#8a8a8a" stroke-width="0.700"/></svg>
<div class="b" style="left:445.3px;top:21.9px;width:391.9px;height:44.7px;background:linear-gradient(90deg,#0c6890 0%,#0f6f98 55%,#177ca6 100%);"></div>
<div class="b" style="left:454.7px;top:27.3px;width:18.1px;height:17.4px;background:#0b4a2c;border:0.900px solid #c8d7cf;box-sizing:border-box;"></div>
<span class="t" style="left:458.4px;top:31.3px;font-size:9.4px;line-height:11.28px;color:#ffffff;font-weight:700;transform:scaleX(1.071);">Tc</span>
<div class="b" style="left:481.5px;top:29.7px;width:26.9px;height:26.1px;background:#fdfdfd;"></div>
<svg class="i" style="left:482.5px;top:31.0px;" width="26" height="24" viewBox="0 0 26 24"><path d="M16 12.500l9-3.500 0.800 2.500-6 3.200-4.500 0.300z" fill="#aeb2b2"/><path d="M16 12.500l4.500-0.300 5.300-0.700" stroke="#8a8e8e" stroke-width="0.500" fill="none"/><path d="M2 19l2.400-1.600 2.400 1.600v3l-2.400 1.400-2.400-1.400z" fill="#7fa8c2"/><path d="M4.400 20.500v3M2 19l2.400 1.500 2.400-1.500" stroke="#dfeaf0" stroke-width="0.500" fill="none"/></svg>
<span class="t" style="left:512.8px;top:30.8px;font-size:10.9px;line-height:13.08px;color:#ffffff;transform:scaleX(0.987);-webkit-text-stroke:0.300px #fff;">TRM-07061/A;1-ARR_CG_A6120013860_1037</span>
<span class="t" style="left:512.8px;top:46.4px;font-size:6.8px;line-height:8.16px;color:#ffffff;font-weight:700;transform:scaleX(0.854);">Owner:</span>
<span class="t" style="left:534.4px;top:46.4px;font-size:6.8px;line-height:8.16px;color:#d4e6ee;transform:scaleX(1.095);">ed (ed)</span>
<span class="t" style="left:572.4px;top:46.4px;font-size:6.8px;line-height:8.16px;color:#ffffff;font-weight:700;transform:scaleX(0.948);">Date Modified:</span>
<span class="t" style="left:618.6px;top:46.4px;font-size:6.8px;line-height:8.16px;color:#d4e6ee;transform:scaleX(0.947);">26-Jul-2024</span>
<span class="t" style="left:663.7px;top:46.4px;font-size:6.8px;line-height:8.16px;color:#ffffff;font-weight:700;transform:scaleX(0.887);">Release Status:</span>
<span class="t" style="left:719.6px;top:46.4px;font-size:6.8px;line-height:8.16px;color:#ffffff;font-weight:700;transform:scaleX(0.941);">Type:</span>
<span class="t" style="left:737.8px;top:46.4px;font-size:6.8px;line-height:8.16px;color:#d4e6ee;transform:scaleX(0.952);">Item Revision</span>
<svg class="i" style="left:818.0px;top:35.0px;" width="11" height="11" viewBox="0 0 11 11"><circle cx="6.600" cy="4.400" r="3.500" fill="none" stroke="#e6f1f6" stroke-width="1.100"/><path d="M4.200 7l-3.400 3.600" stroke="#e6f1f6" stroke-width="1.300"/></svg>
<div class="b" style="left:481.5px;top:66.6px;width:351.2px;height:411.4px;background:#ffffff;border-radius:1.500px 1.500px 0 0;"></div>
<span class="t" style="left:492.6px;top:71.8px;font-size:8.6px;line-height:10.32px;color:#262626;transform:scaleX(0.932);">Overview</span>
<span class="t" style="left:539.0px;top:71.8px;font-size:8.6px;line-height:10.32px;color:#262626;transform:scaleX(0.963);">Content</span>
<span class="t" style="left:580.5px;top:71.8px;font-size:8.6px;line-height:10.32px;color:#262626;transform:scaleX(0.903);">Changes</span>
<span class="t" style="left:624.5px;top:71.8px;font-size:8.6px;line-height:10.32px;color:#262626;transform:scaleX(0.908);">Partners</span>
<span class="t" style="left:667.0px;top:71.8px;font-size:8.6px;line-height:10.32px;color:#2a6f92;transform:scaleX(0.960);">Materials</span>
<span class="t" style="left:713.0px;top:71.8px;font-size:8.6px;line-height:10.32px;color:#262626;transform:scaleX(0.893);">Finishes</span>
<span class="t" style="left:754.5px;top:71.8px;font-size:8.6px;line-height:10.32px;color:#262626;transform:scaleX(0.955);">3D</span>
<div class="b" style="left:665.6px;top:84.4px;width:36.4px;height:1.2px;background:#3f88ab;"></div>
<div class="b" style="left:481.5px;top:88.3px;width:351.2px;height:0.7px;background:#e3e3e3;"></div>
<svg class="i" style="left:813.6px;top:73.6px;" width="5" height="7" viewBox="0 0 5 7"><path d="M0.800 0.500l3 3-3 3" fill="none" stroke="#555" stroke-width="0.900"/></svg>
<div class="b" style="left:802.2px;top:89.0px;width:30.7px;height:389.0px;background:#f2f2f3;"></div>
<svg class="i" style="left:458.8px;top:52.0px;" width="10" height="10" viewBox="0 0 11 11"><g fill="none" stroke="#fff" stroke-width="1" stroke-linejoin="round" stroke-linecap="round"><circle cx="5.500" cy="5.500" r="4.600"/><path d="M8 5.500h-5M5 3.300l-2.200 2.200 2.200 2.200"/></g></svg>
<span class="t" style="left:448.9px;top:62.6px;font-size:6.8px;line-height:8.16px;color:#ffffff;font-weight:700;transform:scaleX(0.760);">No previous</span>
<span class="t" style="left:453.9px;top:69.7px;font-size:6.8px;line-height:8.16px;color:#ffffff;font-weight:700;transform:scaleX(0.760);">location</span>
<svg class="i" style="left:458.8px;top:83.3px;" width="10" height="10" viewBox="0 0 11 11"><g fill="none" stroke="#fff" stroke-width="1" stroke-linejoin="round" stroke-linecap="round"><path d="M1 5.500l4.500-4.300 4.500 4.300M2.200 4.600v5.400h2.300v-3h2v3h2.300v-5.400"/></g></svg>
<span class="t" style="left:456.6px;top:93.5px;font-size:6.8px;line-height:8.16px;color:#ffffff;font-weight:700;transform:scaleX(0.760);">Home</span>
<svg class="i" style="left:458.8px;top:109.4px;" width="10" height="10" viewBox="0 0 11 11"><g fill="none" stroke="#fff" stroke-width="1" stroke-linejoin="round" stroke-linecap="round"><rect x="1.800" y="3.200" width="7.400" height="6.400" rx="1.500"/><path d="M5.500 3.200v-2M4 6h0.200M6.800 6h0.200M4 8h3"/><circle cx="5.500" cy="0.900" r="0.500"/></g></svg>
<span class="t" style="left:452.2px;top:119.4px;font-size:6.8px;line-height:8.16px;color:#ffffff;font-weight:700;transform:scaleX(0.760);">Assistant</span>
<svg class="i" style="left:458.8px;top:134.3px;" width="10" height="10" viewBox="0 0 11 11"><g fill="none" stroke="#fff" stroke-width="1" stroke-linejoin="round" stroke-linecap="round"><path d="M1 1.200h6v4.200h-3.300l-1.700 1.600v-1.600h-1z"/><path d="M7.800 3.800h2.400v4.200h-1v1.600l-1.700-1.600h-2.500v-1.800"/></g></svg>
<span class="t" style="left:448.6px;top:144.8px;font-size:6.8px;line-height:8.16px;color:#ffffff;font-weight:700;transform:scaleX(0.760);">Discussions</span>
<svg class="i" style="left:458.8px;top:160.4px;" width="10" height="10" viewBox="0 0 11 11"><g fill="none" stroke="#fff" stroke-width="1" stroke-linejoin="round" stroke-linecap="round"><path d="M1 2h3.200l1 1.200h4.800v6.300h-9z"/><path d="M1 4.600h9"/></g></svg>
<span class="t" style="left:454.5px;top:170.4px;font-size:6.8px;line-height:8.16px;color:#ffffff;font-weight:700;transform:scaleX(0.760);">Folders</span>
<svg class="i" style="left:458.8px;top:187.0px;" width="10" height="10" viewBox="0 0 11 11"><g fill="none" stroke="#fff" stroke-width="1" stroke-linejoin="round" stroke-linecap="round"><path d="M1 2h3.200l1 1.200h4.800v6.300h-9z"/><path d="M3.600 8l3.600-3.400M4.600 4.600h2.600v2.600"/></g></svg>
<span class="t" style="left:456.0px;top:196.2px;font-size:6.8px;line-height:8.16px;color:#ffffff;font-weight:700;transform:scaleX(0.760);">Active</span>
<span class="t" style="left:454.5px;top:203.3px;font-size:6.8px;line-height:8.16px;color:#ffffff;font-weight:700;transform:scaleX(0.760);">Folders</span>
<svg class="i" style="left:458.8px;top:216.3px;" width="10" height="10" viewBox="0 0 11 11"><g fill="none" stroke="#fff" stroke-width="1" stroke-linejoin="round" stroke-linecap="round"><path d="M1 5.500l2-3.700h5l2 3.700v3.700h-9z"/><path d="M1 5.500h2.600l0.800 1.400h2.200l0.800-1.400h2.600"/></g></svg>
<span class="t" style="left:456.9px;top:227.0px;font-size:6.8px;line-height:8.16px;color:#ffffff;font-weight:700;transform:scaleX(0.760);">Inbox</span>
<svg class="i" style="left:458.8px;top:242.4px;" width="10" height="10" viewBox="0 0 11 11"><g fill="none" stroke="#fff" stroke-width="1" stroke-linejoin="round" stroke-linecap="round"><circle cx="5.500" cy="3" r="2.300"/><path d="M5.500 5.300v2.200M2 7.500h7l1 2.200h-9z"/></g></svg>
<span class="t" style="left:451.7px;top:253.1px;font-size:6.8px;line-height:8.16px;color:#ffffff;font-weight:700;transform:scaleX(0.760);">Programs</span>
<svg class="i" style="left:458.8px;top:268.5px;" width="10" height="10" viewBox="0 0 11 11"><g fill="none" stroke="#fff" stroke-width="1" stroke-linejoin="round" stroke-linecap="round"><path d="M5.500 1.200l4.500 8.200h-9z"/></g></svg>
<span class="t" style="left:452.9px;top:278.7px;font-size:6.8px;line-height:8.16px;color:#ffffff;font-weight:700;transform:scaleX(0.760);">Changes</span>
<svg class="i" style="left:458.8px;top:292.8px;" width="10" height="10" viewBox="0 0 11 11"><g fill="none" stroke="#fff" stroke-width="1" stroke-linejoin="round" stroke-linecap="round"><path d="M5.500 1l3.200 1.800v3.400l-3.200 1.800-3.200-1.800v-3.400z"/><path d="M1 7.600l4.500 2.400 4.500-2.400"/></g></svg>
<span class="t" style="left:453.2px;top:304.2px;font-size:6.8px;line-height:8.16px;color:#ffffff;font-weight:700;transform:scaleX(0.760);">Program</span>
<span class="t" style="left:448.6px;top:311.3px;font-size:6.8px;line-height:8.16px;color:#ffffff;font-weight:700;transform:scaleX(0.760);">Deliverables</span>
<svg class="i" style="left:458.8px;top:343.3px;" width="10" height="10" viewBox="0 0 11 11"><g fill="none" stroke="#fff" stroke-width="1" stroke-linejoin="round" stroke-linecap="round"><path d="M4 1l3.400 6h-6.800z"/><rect x="5.600" y="4.600" width="4.800" height="5" fill="#0d6a92"/><path d="M5.600 6.300h4.800M5.600 8h4.800M8 4.600v5"/></g></svg>
<span class="t" style="left:452.0px;top:352.6px;font-size:6.8px;line-height:8.16px;color:#ffffff;font-weight:700;transform:scaleX(0.760);">No Active</span>
<span class="t" style="left:454.3px;top:359.7px;font-size:6.8px;line-height:8.16px;color:#ffffff;font-weight:700;transform:scaleX(0.760);">Change</span>
<svg class="i" style="left:458.8px;top:372.3px;" width="10" height="10" viewBox="0 0 11 11"><g fill="none" stroke="#fff" stroke-width="1" stroke-linejoin="round" stroke-linecap="round"><path d="M1.400 7.400l6-6 2.200 2.200-6 6z"/><path d="M3.400 5.600l1 1M5 4l1 1M6.600 2.400l1 1"/></g></svg>
<span class="t" style="left:448.1px;top:383.4px;font-size:6.8px;line-height:8.16px;color:#ffffff;font-weight:700;transform:scaleX(0.760);">IMM Session</span>
<span class="t" style="left:454.0px;top:390.2px;font-size:6.8px;line-height:8.16px;color:#ffffff;font-weight:700;transform:scaleX(0.760);">Options</span>
<svg class="i" style="left:458.8px;top:404.2px;" width="10" height="10" viewBox="0 0 11 11"><g fill="none" stroke="#fff" stroke-width="1" stroke-linejoin="round" stroke-linecap="round"><path d="M2.400 8v-3.500a3.100 3.100 0 0 1 6.200 0v3.500l1 1h-8.200z"/><path d="M4.600 10h1.800"/></g></svg>
<span class="t" style="left:456.5px;top:414.5px;font-size:6.8px;line-height:8.16px;color:#ffffff;font-weight:700;transform:scaleX(0.760);">Alerts</span>
<div class="b" style="left:459.9px;top:443.1px;width:1.8px;height:1.8px;background:#fff;border-radius:1px;"></div>
<div class="b" style="left:462.9px;top:443.1px;width:1.8px;height:1.8px;background:#fff;border-radius:1px;"></div>
<div class="b" style="left:465.9px;top:443.1px;width:1.8px;height:1.8px;background:#fff;border-radius:1px;"></div>
<div class="b" style="left:455.0px;top:455.4px;width:17.8px;height:17.8px;background:#f4f4f4;border-radius:50%;"></div>
<span class="t" style="left:461.6px;top:459.7px;font-size:8px;line-height:9.60px;color:#555;">e</span>
<div class="b" style="left:491.7px;top:99.0px;width:300.1px;height:16.6px;background:#f0f0f0;"></div>
<svg class="i" style="left:497.0px;top:106.0px;" width="5" height="4" viewBox="0 0 5 4"><path d="M0.200 0.300h4.400l-2.200 3.200z" fill="#222"/></svg>
<span class="t" style="left:503.6px;top:103.4px;font-size:7.6px;line-height:9.12px;color:#2a2a2a;font-weight:700;transform:scaleX(0.882);">MATERIALS</span>
<svg class="i" style="left:499.8px;top:128.7px;" width="9.4" height="8" viewBox="0 0 9.4 8"><rect x="0.400" y="0.400" width="8.600" height="7" fill="#cdcdcd" stroke="#6a6a6a" stroke-width="0.700"/><path d="M0.400 2.800h8.600M0.400 5.100h8.600" stroke="#7a7a7a" stroke-width="0.600"/></svg>
<span class="t" style="left:511.0px;top:129.2px;font-size:6.3px;line-height:7.56px;color:#555;transform:scaleX(0.863);">Table</span>
<svg class="i" style="left:510.2px;top:139.3px;" width="4" height="3" viewBox="0 0 4 3"><path d="M0.300 0.400l1.600 1.600 1.600-1.600" fill="none" stroke="#999" stroke-width="0.600"/></svg>
<svg class="i" style="left:532.0px;top:129.3px;" width="9" height="7" viewBox="0 0 9 7"><path d="M0.300 1.500l0.900 0.900 1.400-1.800M0.300 5l0.900 0.900 1.400-1.800" fill="none" stroke="#555" stroke-width="0.600"/><path d="M4.200 1.600h4.600M4.200 5.200h4.600" stroke="#555" stroke-width="0.700"/></svg>
<span class="t" style="left:543.2px;top:125.6px;font-size:6.3px;line-height:7.56px;color:#555;transform:scaleX(0.849);">Selection</span>
<span class="t" style="left:543.2px;top:132.8px;font-size:6.3px;line-height:7.56px;color:#555;transform:scaleX(0.914);">Mode</span>
<svg class="i" style="left:574.0px;top:129.1px;" width="9" height="7" viewBox="0 0 9 7"><path d="M0.500 4l2.600 2.600 5.400-6" fill="none" stroke="#555" stroke-width="0.700"/></svg>
<span class="t" style="left:584.8px;top:125.6px;font-size:6.3px;line-height:7.56px;color:#555;transform:scaleX(0.845);">Select</span>
<span class="t" style="left:584.8px;top:132.8px;font-size:6.3px;line-height:7.56px;color:#555;transform:scaleX(0.885);">All</span>
<svg class="i" style="left:695.0px;top:127.9px;" width="9" height="9.6" viewBox="0 0 9 9.6"><path d="M0.500 1.500h4.500v7.500h-4.500z" fill="none" stroke="#c9c9c9" stroke-width="0.700"/><path d="M3.600 3.600h3l1.800 1.800v3.800h-4.800z" fill="#fff" stroke="#c9c9c9" stroke-width="0.700"/><rect x="1.600" y="0.600" width="2.300" height="1.500" fill="#d5d5d5"/></svg>
<span class="t" style="left:705.6px;top:129.2px;font-size:6.3px;line-height:7.56px;color:#c4c4c4;transform:scaleX(0.832);">Paste</span>
<svg class="i" style="left:726.7px;top:128.1px;" width="10" height="9.2" viewBox="0 0 10 9.2"><path d="M5.800 2.500v-2h-5.300v8.200h5.300v-2" fill="none" stroke="#444" stroke-width="0.800"/><path d="M3.200 4.600h5.800M7.200 2.800l1.800 1.800-1.800 1.800" fill="none" stroke="#444" stroke-width="0.800"/></svg>
<span class="t" style="left:738.2px;top:125.6px;font-size:6.3px;line-height:7.56px;color:#555;transform:scaleX(0.857);">Export</span>
<span class="t" style="left:738.2px;top:132.8px;font-size:6.3px;line-height:7.56px;color:#555;transform:scaleX(0.857);">To...</span>
<svg class="i" style="left:761.4px;top:127.9px;" width="9.6" height="9.6" viewBox="0 0 9.6 9.6"><circle cx="4.800" cy="4.800" r="4.200" fill="none" stroke="#444" stroke-width="0.700"/><path d="M2.400 4.800h4.800M4.800 2.400v4.800" stroke="#444" stroke-width="0.700"/></svg>
<span class="t" style="left:773.6px;top:125.6px;font-size:6.3px;line-height:7.56px;color:#555;transform:scaleX(0.901);">Add</span>
<span class="t" style="left:773.6px;top:132.8px;font-size:6.3px;line-height:7.56px;color:#555;transform:scaleX(1.066);">to</span>
<div class="b" style="left:496.0px;top:143.9px;width:291.4px;height:0.7px;background:#dcdcdc;"></div>
<div class="b" style="left:496.0px;top:144.5px;width:291.4px;height:14.9px;background:#e6e6e6;"></div>
<span class="t" style="left:523.0px;top:147.9px;font-size:7.6px;line-height:9.12px;color:#2d2d2d;transform:scaleX(0.892);">Object</span>
<svg class="i" style="left:546.9px;top:150.5px;" width="4.6" height="3.2" viewBox="0 0 4.6 3.2"><path d="M0.200 2.900l2.100-2.700 2.100 2.700z" fill="#2e2e2e"/></svg>
<div class="b" style="left:622.6px;top:144.5px;width:0.8px;height:14.9px;background:#c9c9c9;"></div>
<span class="t" style="left:628.0px;top:147.9px;font-size:7.6px;line-height:9.12px;color:#2d2d2d;transform:scaleX(0.819);">Release Status</span>
<svg class="i" style="left:674.9px;top:148.8px;" width="4.6" height="6.6" viewBox="0 0 4.6 6.6"><path d="M0.200 2.800l2.100-2.600 2.100 2.600zM0.200 3.800l2.100 2.600 2.100-2.600z" fill="#2e2e2e"/></svg>
<div class="b" style="left:684.2px;top:144.5px;width:0.8px;height:14.9px;background:#c9c9c9;"></div>
<span class="t" style="left:689.4px;top:147.9px;font-size:7.6px;line-height:9.12px;color:#2d2d2d;transform:scaleX(0.793);">Mass</span>
<svg class="i" style="left:708.7px;top:148.8px;" width="4.6" height="6.6" viewBox="0 0 4.6 6.6"><path d="M0.200 2.800l2.100-2.600 2.100 2.600zM0.200 3.800l2.100 2.600 2.100-2.600z" fill="#2e2e2e"/></svg>
<div class="b" style="left:729.2px;top:144.5px;width:0.8px;height:14.9px;background:#c9c9c9;"></div>
<span class="t" style="left:734.6px;top:147.9px;font-size:7.6px;line-height:9.12px;color:#2d2d2d;transform:scaleX(0.879);">Unit Of Meas</span>
<svg class="i" style="left:776.4px;top:147.5px;" width="9.2" height="9.2" viewBox="0 0 9.2 9.2"><g fill="none" stroke="#444" stroke-width="0.800"><circle cx="4.600" cy="4.600" r="1.500"/><path d="M4.600 0.500l0.900 1.100 1.400-0.400 0.400 1.400 1.400 0.400-0.400 1.400 0.900 1.100-1.100 0.900 0.100 1.500-1.400 0.100-0.700 1.300-1.300-0.600-1.300 0.600-0.700-1.300-1.400-0.100 0.100-1.500-1.100-0.900 0.900-1.100-0.400-1.400 1.400-0.400 0.400-1.400 1.400 0.400z"/></g></svg>
<div class="b" style="left:496.0px;top:159.4px;width:291.4px;height:17.6px;background:#ffffff;"></div>
<svg class="i" style="left:502.0px;top:162.4px;" width="14" height="12" viewBox="0 0 14 12"><g stroke="#2b7f9e" stroke-width="0.700"><path d="M5 2l-1 4.600M4 6.600l-2.400 3M4 6.600l4 3M8 9.600l3.400-2.600"/></g><g fill="#1b7490"><circle cx="5" cy="2" r="1.700"/><circle cx="4.600" cy="6.600" r="1.600"/><circle cx="1.700" cy="9.900" r="1.500"/><circle cx="8.200" cy="10.200" r="1.600"/><circle cx="11.600" cy="7" r="1.300"/></g></svg>
<span class="t" style="left:523.5px;top:164.7px;font-size:6.6px;line-height:7.92px;color:#555;transform:scaleX(0.951);">000970/A;1-AISI_Steel_1008-HR</span>
<span class="t" style="left:689.8px;top:164.7px;font-size:6.6px;line-height:7.92px;color:#555;transform:scaleX(0.968);">8366.7005</span>
<span class="t" style="left:735.6px;top:164.7px;font-size:6.6px;line-height:7.92px;color:#555;transform:scaleX(0.929);">Grams</span>
<div class="b" style="left:622.7px;top:159.4px;width:0.6px;height:17.6px;background:#ececec;"></div>
<div class="b" style="left:496.0px;top:177.0px;width:291.4px;height:0.6px;background:#e4e4e4;"></div>
<div class="b" style="left:496.0px;top:177.6px;width:291.4px;height:5.2px;background:#f8f8f8;"></div>
<div class="b" style="left:624.6px;top:178.4px;width:48.6px;height:2.8px;background:#c2c2c2;border-radius:1.400px;"></div>
<div class="b" style="left:496.0px;top:182.8px;width:291.4px;height:0.7px;background:#dedede;"></div>
<div class="b" style="left:491.7px;top:291.5px;width:300.1px;height:16.6px;background:#f0f0f0;"></div>
<svg class="i" style="left:497.0px;top:298.5px;" width="5" height="4" viewBox="0 0 5 4"><path d="M0.200 0.300h4.400l-2.200 3.200z" fill="#222"/></svg>
<span class="t" style="left:503.6px;top:295.9px;font-size:7.6px;line-height:9.12px;color:#2a2a2a;font-weight:700;transform:scaleX(0.883);">MATERIALS FOR COATING</span>
<svg class="i" style="left:499.8px;top:321.2px;" width="9.4" height="8" viewBox="0 0 9.4 8"><rect x="0.400" y="0.400" width="8.600" height="7" fill="#cdcdcd" stroke="#6a6a6a" stroke-width="0.700"/><path d="M0.400 2.800h8.600M0.400 5.100h8.600" stroke="#7a7a7a" stroke-width="0.600"/></svg>
<span class="t" style="left:511.0px;top:321.7px;font-size:6.3px;line-height:7.56px;color:#555;transform:scaleX(0.863);">Table</span>
<svg class="i" style="left:510.2px;top:331.8px;" width="4" height="3" viewBox="0 0 4 3"><path d="M0.300 0.400l1.600 1.600 1.600-1.600" fill="none" stroke="#999" stroke-width="0.600"/></svg>
<svg class="i" style="left:532.0px;top:321.8px;" width="9" height="7" viewBox="0 0 9 7"><path d="M0.300 1.500l0.900 0.900 1.400-1.800M0.300 5l0.900 0.900 1.400-1.800" fill="none" stroke="#555" stroke-width="0.600"/><path d="M4.200 1.600h4.600M4.200 5.200h4.600" stroke="#555" stroke-width="0.700"/></svg>
<span class="t" style="left:543.2px;top:318.1px;font-size:6.3px;line-height:7.56px;color:#555;transform:scaleX(0.849);">Selection</span>
<span class="t" style="left:543.2px;top:325.3px;font-size:6.3px;line-height:7.56px;color:#555;transform:scaleX(0.914);">Mode</span>
<svg class="i" style="left:574.0px;top:321.6px;" width="9" height="7" viewBox="0 0 9 7"><path d="M0.500 4l2.600 2.600 5.400-6" fill="none" stroke="#555" stroke-width="0.700"/></svg>
<span class="t" style="left:584.8px;top:318.1px;font-size:6.3px;line-height:7.56px;color:#555;transform:scaleX(0.845);">Select</span>
<span class="t" style="left:584.8px;top:325.3px;font-size:6.3px;line-height:7.56px;color:#555;transform:scaleX(0.885);">All</span>
<svg class="i" style="left:695.0px;top:320.4px;" width="9" height="9.6" viewBox="0 0 9 9.6"><path d="M0.500 1.500h4.500v7.500h-4.500z" fill="none" stroke="#c9c9c9" stroke-width="0.700"/><path d="M3.600 3.600h3l1.800 1.800v3.800h-4.800z" fill="#fff" stroke="#c9c9c9" stroke-width="0.700"/><rect x="1.600" y="0.600" width="2.300" height="1.500" fill="#d5d5d5"/></svg>
<span class="t" style="left:705.6px;top:321.7px;font-size:6.3px;line-height:7.56px;color:#c4c4c4;transform:scaleX(0.832);">Paste</span>
<svg class="i" style="left:726.7px;top:320.6px;" width="10" height="9.2" viewBox="0 0 10 9.2"><path d="M5.800 2.500v-2h-5.300v8.200h5.300v-2" fill="none" stroke="#444" stroke-width="0.800"/><path d="M3.200 4.600h5.800M7.200 2.800l1.800 1.800-1.800 1.800" fill="none" stroke="#444" stroke-width="0.800"/></svg>
<span class="t" style="left:738.2px;top:318.1px;font-size:6.3px;line-height:7.56px;color:#555;transform:scaleX(0.857);">Export</span>
<span class="t" style="left:738.2px;top:325.3px;font-size:6.3px;line-height:7.56px;color:#555;transform:scaleX(0.857);">To...</span>
<svg class="i" style="left:761.4px;top:320.4px;" width="9.6" height="9.6" viewBox="0 0 9.6 9.6"><circle cx="4.800" cy="4.800" r="4.200" fill="none" stroke="#444" stroke-width="0.700"/><path d="M2.400 4.800h4.800M4.800 2.400v4.800" stroke="#444" stroke-width="0.700"/></svg>
<span class="t" style="left:773.6px;top:318.1px;font-size:6.3px;line-height:7.56px;color:#555;transform:scaleX(0.901);">Add</span>
<span class="t" style="left:773.6px;top:325.3px;font-size:6.3px;line-height:7.56px;color:#555;transform:scaleX(1.066);">to</span>
<div class="b" style="left:496.0px;top:336.4px;width:291.4px;height:0.7px;background:#dcdcdc;"></div>
<div class="b" style="left:496.0px;top:337.0px;width:291.4px;height:14.9px;background:#e6e6e6;"></div>
<span class="t" style="left:523.0px;top:340.4px;font-size:7.6px;line-height:9.12px;color:#2d2d2d;transform:scaleX(0.892);">Object</span>
<svg class="i" style="left:546.9px;top:341.3px;" width="4.6" height="6.6" viewBox="0 0 4.6 6.6"><path d="M0.200 2.800l2.100-2.600 2.100 2.600zM0.200 3.800l2.100 2.600 2.100-2.600z" fill="#2e2e2e"/></svg>
<div class="b" style="left:601.4px;top:337.0px;width:0.8px;height:14.9px;background:#c9c9c9;"></div>
<span class="t" style="left:605.6px;top:340.4px;font-size:7.6px;line-height:9.12px;color:#2d2d2d;transform:scaleX(0.830);">Release Status</span>
<svg class="i" style="left:653.5px;top:341.3px;" width="4.6" height="6.6" viewBox="0 0 4.6 6.6"><path d="M0.200 2.800l2.100-2.600 2.100 2.600zM0.200 3.800l2.100 2.600 2.100-2.600z" fill="#2e2e2e"/></svg>
<div class="b" style="left:684.2px;top:337.0px;width:0.8px;height:14.9px;background:#c9c9c9;"></div>
<span class="t" style="left:688.9px;top:340.4px;font-size:7.6px;line-height:9.12px;color:#2d2d2d;transform:scaleX(0.793);">Mass</span>
<svg class="i" style="left:708.7px;top:341.3px;" width="4.6" height="6.6" viewBox="0 0 4.6 6.6"><path d="M0.200 2.800l2.100-2.600 2.100 2.600zM0.200 3.800l2.100 2.600 2.100-2.600z" fill="#2e2e2e"/></svg>
<div class="b" style="left:766.0px;top:337.0px;width:0.8px;height:14.9px;background:#c9c9c9;"></div>
<span class="t" style="left:771.0px;top:340.4px;font-size:7.6px;line-height:9.12px;color:#2d2d2d;transform:scaleX(0.520);">L</span>
<svg class="i" style="left:776.4px;top:340.0px;" width="9.2" height="9.2" viewBox="0 0 9.2 9.2"><g fill="none" stroke="#444" stroke-width="0.800"><circle cx="4.600" cy="4.600" r="1.500"/><path d="M4.600 0.500l0.900 1.100 1.400-0.400 0.400 1.400 1.400 0.400-0.400 1.400 0.900 1.100-1.100 0.900 0.100 1.500-1.400 0.100-0.700 1.300-1.300-0.600-1.300 0.600-0.700-1.300-1.400-0.100 0.100-1.500-1.100-0.900 0.900-1.100-0.400-1.400 1.400-0.400 0.400-1.400 1.400 0.400z"/></g></svg>
<div class="b" style="left:496.0px;top:364.8px;width:291.4px;height:5.2px;background:#f8f8f8;"></div>
<div class="b" style="left:602.5px;top:365.6px;width:49.5px;height:2.8px;background:#c2c2c2;border-radius:1.400px;"></div>
<div class="b" style="left:496.0px;top:370.2px;width:291.4px;height:0.7px;background:#e8e8e8;"></div>
<div class="b" style="left:496.0px;top:120.1px;width:291.4px;height:0.7px;background:#f0f0f0;"></div>
<div class="b" style="left:496.0px;top:312.6px;width:291.4px;height:0.7px;background:#f0f0f0;"></div>
<svg class="i" style="left:812.6px;top:101.5px;" width="9.8" height="9.8" viewBox="0 0 11 11"><g fill="none" stroke="#555" stroke-width="0.850" stroke-linejoin="round" stroke-linecap="round"><circle cx="5.500" cy="5.500" r="4.500"/><path d="M5.500 4.800v3.200M5.500 2.900v0.300"/></g></svg>
<span class="t" style="left:803.1px;top:111.5px;font-size:6.7px;line-height:8.04px;color:#4a4a4a;transform:scaleX(0.860);">Information</span>
<svg class="i" style="left:812.6px;top:127.2px;" width="9.8" height="9.8" viewBox="0 0 11 11"><g fill="none" stroke="#555" stroke-width="0.850" stroke-linejoin="round" stroke-linecap="round"><path d="M1 1.200h6v4.200h-3.300l-1.700 1.600v-1.600h-1z"/><path d="M7.800 3.800h2.400v4.200h-1v1.600l-1.700-1.600h-2.500v-1.800"/></g></svg>
<span class="t" style="left:807.4px;top:137.6px;font-size:6.7px;line-height:8.04px;color:#4a4a4a;transform:scaleX(0.860);">Discuss</span>
<svg class="i" style="left:812.6px;top:154.4px;" width="9.8" height="9.8" viewBox="0 0 11 11"><g fill="none" stroke="#555" stroke-width="0.850" stroke-linejoin="round" stroke-linecap="round"><path d="M4.500 2.500h-3v7.500h7.500v-3"/><path d="M4 7c0-3 1.800-4.600 5-4.600M7.200 0.600l2 1.800-2 1.800"/></g></svg>
<span class="t" style="left:810.5px;top:163.7px;font-size:6.7px;line-height:8.04px;color:#4a4a4a;transform:scaleX(0.860);">Open</span>
<svg class="i" style="left:804.6px;top:157.5px;" width="3.6" height="3.6" viewBox="0 0 3.6 3.6"><path d="M2.800 0.200l-2.200 1.600 2.200 1.600z" fill="#8a8a8a"/></svg>
<svg class="i" style="left:812.6px;top:180.1px;" width="9.8" height="9.8" viewBox="0 0 11 11"><g fill="none" stroke="#b5b5b5" stroke-width="0.850" stroke-linejoin="round" stroke-linecap="round"><circle cx="3" cy="8.500" r="1.500"/><circle cx="8" cy="8.500" r="1.500"/><path d="M3.800 7.200l4-6M7.200 7.200l-4-6"/></g></svg>
<span class="t" style="left:813.0px;top:189.7px;font-size:6.7px;line-height:8.04px;color:#b5b5b5;transform:scaleX(0.860);">Cut</span>
<svg class="i" style="left:812.6px;top:206.3px;" width="9.8" height="9.8" viewBox="0 0 11 11"><g fill="none" stroke="#555" stroke-width="0.850" stroke-linejoin="round" stroke-linecap="round"><path d="M1 1h4.500v7.500h-4.500z"/><path d="M3.800 3h3.400l2 2v5h-5.400z" fill="#efefef"/><path d="M7.200 3v2h2"/></g></svg>
<span class="t" style="left:810.8px;top:215.8px;font-size:6.7px;line-height:8.04px;color:#4a4a4a;transform:scaleX(0.860);">Copy</span>
<svg class="i" style="left:812.6px;top:232.5px;" width="9.8" height="9.8" viewBox="0 0 11 11"><g fill="none" stroke="#b5b5b5" stroke-width="0.850" stroke-linejoin="round" stroke-linecap="round"><path d="M1 1.600h5v8h-5z"/><path d="M4 4h3.200l2 2v4.200h-5.200z" fill="#efefef"/><rect x="2.300" y="0.600" width="2.400" height="1.600" fill="#bbb"/></g></svg>
<span class="t" style="left:810.1px;top:241.8px;font-size:6.7px;line-height:8.04px;color:#b5b5b5;transform:scaleX(0.860);">Paste</span>
<svg class="i" style="left:812.6px;top:258.5px;" width="9.8" height="9.8" viewBox="0 0 11 11"><g fill="none" stroke="#555" stroke-width="0.850" stroke-linejoin="round" stroke-linecap="round"><rect x="1" y="1" width="9" height="9"/><path d="M1 3.200h9"/><path d="M3.400 8.200l3.400-3.200M4.600 5h2.200v2.200"/></g></svg>
<span class="t" style="left:807.4px;top:268.3px;font-size:6.7px;line-height:8.04px;color:#4a4a4a;transform:scaleX(0.860);">Open in</span>
<span class="t" style="left:803.6px;top:275.8px;font-size:6.7px;line-height:8.04px;color:#4a4a4a;transform:scaleX(0.860);">Solid Edge</span>
<svg class="i" style="left:812.6px;top:290.1px;" width="9.8" height="9.8" viewBox="0 0 11 11"><g fill="none" stroke="#555" stroke-width="0.850" stroke-linejoin="round" stroke-linecap="round"><path d="M5.500 0.600v3M5.500 7.400v3M0.600 5.500h3M7.400 5.500h3M2 2l2 2M7 7l2 2M9 2l-2 2M4 7l-2 2"/></g></svg>
<span class="t" style="left:811.7px;top:300.0px;font-size:6.7px;line-height:8.04px;color:#4a4a4a;transform:scaleX(0.860);">New</span>
<svg class="i" style="left:804.6px;top:293.2px;" width="3.6" height="3.6" viewBox="0 0 3.6 3.6"><path d="M2.800 0.200l-2.200 1.600 2.200 1.600z" fill="#8a8a8a"/></svg>
<svg class="i" style="left:812.6px;top:316.5px;" width="9.8" height="9.8" viewBox="0 0 11 11"><g fill="none" stroke="#555" stroke-width="0.850" stroke-linejoin="round" stroke-linecap="round"><path d="M1.200 9.800l0.700-2.800 5.800-5.800 2.100 2.100-5.800 5.800z"/><path d="M6.600 2.300l2.100 2.100"/></g></svg>
<span class="t" style="left:812.5px;top:326.1px;font-size:6.7px;line-height:8.04px;color:#4a4a4a;transform:scaleX(0.860);">Edit</span>
<svg class="i" style="left:804.6px;top:319.6px;" width="3.6" height="3.6" viewBox="0 0 3.6 3.6"><path d="M2.800 0.200l-2.200 1.600 2.200 1.600z" fill="#8a8a8a"/></svg>
<svg class="i" style="left:812.6px;top:343.0px;" width="9.8" height="9.8" viewBox="0 0 11 11"><g fill="none" stroke="#555" stroke-width="0.850" stroke-linejoin="round" stroke-linecap="round"><path d="M1.200 9.800l5-5M5.400 1.500l4 4M7.500 1l2.500 2.500-1.500 1-2-2z"/><path d="M9.800 9.800l-4.600-4.600M1.500 1.200l2 0.500 1 2-1 1-2-1z"/></g></svg>
<span class="t" style="left:807.1px;top:352.2px;font-size:6.7px;line-height:8.04px;color:#4a4a4a;transform:scaleX(0.860);">Manage</span>
<svg class="i" style="left:804.6px;top:346.1px;" width="3.6" height="3.6" viewBox="0 0 3.6 3.6"><path d="M2.800 0.200l-2.200 1.600 2.200 1.600z" fill="#8a8a8a"/></svg>
<svg class="i" style="left:812.6px;top:368.5px;" width="9.8" height="9.8" viewBox="0 0 11 11"><g fill="none" stroke="#555" stroke-width="0.850" stroke-linejoin="round" stroke-linecap="round"><circle cx="2.400" cy="5.500" r="1.500"/><circle cx="8.600" cy="2" r="1.500"/><circle cx="8.600" cy="9" r="1.500"/><path d="M3.700 4.800l3.600-2.100M3.700 6.200l3.600 2.100"/></g></svg>
<span class="t" style="left:809.8px;top:378.2px;font-size:6.7px;line-height:8.04px;color:#4a4a4a;transform:scaleX(0.860);">Share</span>
<svg class="i" style="left:804.6px;top:371.6px;" width="3.6" height="3.6" viewBox="0 0 3.6 3.6"><path d="M2.800 0.200l-2.200 1.600 2.200 1.600z" fill="#8a8a8a"/></svg>
<svg class="i" style="left:812.6px;top:394.7px;" width="9.8" height="9.8" viewBox="0 0 11 11"><g fill="none" stroke="#555" stroke-width="0.850" stroke-linejoin="round" stroke-linecap="round"><path d="M0.600 5.500c2.400-4 7.400-4 9.800 0-2.400 4-7.400 4-9.800 0z"/><circle cx="5.500" cy="5.500" r="1.700"/></g></svg>
<span class="t" style="left:811.3px;top:404.4px;font-size:6.7px;line-height:8.04px;color:#4a4a4a;transform:scaleX(0.860);">View</span>
<svg class="i" style="left:804.6px;top:397.8px;" width="3.6" height="3.6" viewBox="0 0 3.6 3.6"><path d="M2.800 0.200l-2.200 1.600 2.200 1.600z" fill="#8a8a8a"/></svg>
</div></div></body></html>
